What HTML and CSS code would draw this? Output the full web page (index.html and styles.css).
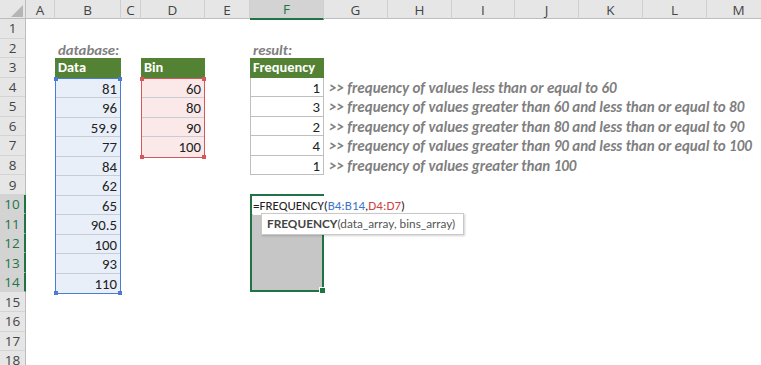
FILE: index.html
```html
<!DOCTYPE html>
<html lang="en">
<head>
    <meta charset="UTF-8">
    <meta name="viewport" content="width=device-width, initial-scale=1.0">
    <title>FREQUENCY - worksheet</title>
    <link rel="stylesheet" href="styles.css">
</head>
<body>
    <div class="sheet">
        <!-- En-têtes de colonnes -->
        <div class="col-heads">
            <div class="corner"><span class="corner-mark"></span></div>
            <div class="col-head">A</div>
            <div class="col-head">B</div>
            <div class="col-head">C</div>
            <div class="col-head">D</div>
            <div class="col-head">E</div>
            <div class="col-head selected">F</div>
            <div class="col-head">G</div>
            <div class="col-head">H</div>
            <div class="col-head">I</div>
            <div class="col-head">J</div>
            <div class="col-head">K</div>
            <div class="col-head">L</div>
            <div class="col-head">M</div>
        </div>

        <div class="sheet-body">
            <!-- En-têtes de lignes -->
            <div class="row-heads">
                <div class="row-head">1</div>
                <div class="row-head">2</div>
                <div class="row-head">3</div>
                <div class="row-head">4</div>
                <div class="row-head">5</div>
                <div class="row-head">6</div>
                <div class="row-head">7</div>
                <div class="row-head">8</div>
                <div class="row-head">9</div>
                <div class="row-head selected">10</div>
                <div class="row-head selected">11</div>
                <div class="row-head selected">12</div>
                <div class="row-head selected">13</div>
                <div class="row-head selected">14</div>
                <div class="row-head">15</div>
                <div class="row-head">16</div>
                <div class="row-head">17</div>
                <div class="row-head">18</div>
            </div>

            <div class="cells">
                <div class="caption cap-database">database:</div>
                <div class="caption cap-result">result:</div>

                <!-- B3:B14 -->
                <div class="range range-data">
                    <div class="cell head">Data</div>
                    <div class="ref ref-blue">
                        <div class="cell num">81</div>
                        <div class="cell num">96</div>
                        <div class="cell num">59.9</div>
                        <div class="cell num">77</div>
                        <div class="cell num">84</div>
                        <div class="cell num">62</div>
                        <div class="cell num">65</div>
                        <div class="cell num">90.5</div>
                        <div class="cell num">100</div>
                        <div class="cell num">93</div>
                        <div class="cell num">110</div>
                        <span class="dot tl"></span><span class="dot tr"></span>
                        <span class="dot bl"></span><span class="dot br"></span>
                    </div>
                </div>

                <!-- D3:D7 -->
                <div class="range range-bin">
                    <div class="cell head">Bin</div>
                    <div class="ref ref-red">
                        <div class="cell num">60</div>
                        <div class="cell num">80</div>
                        <div class="cell num">90</div>
                        <div class="cell num">100</div>
                        <span class="dot tl"></span><span class="dot tr"></span>
                        <span class="dot bl"></span><span class="dot br"></span>
                    </div>
                </div>

                <!-- F3:F8 -->
                <div class="range range-freq">
                    <div class="cell head">Frequency</div>
                    <div class="plain">
                        <div class="cell num">1</div>
                        <div class="cell num">3</div>
                        <div class="cell num">2</div>
                        <div class="cell num">4</div>
                        <div class="cell num">1</div>
                    </div>
                </div>

                <!-- G4:G8 -->
                <div class="notes">
                    <div class="note">&gt;&gt; frequency of values less than or equal to 60</div>
                    <div class="note">&gt;&gt; frequency of values greater than 60 and less than or equal to 80</div>
                    <div class="note">&gt;&gt; frequency of values greater than 80 and less than or equal to 90</div>
                    <div class="note">&gt;&gt; frequency of values greater than 90 and less than or equal to 100</div>
                    <div class="note">&gt;&gt; frequency of values greater than 100</div>
                </div>

                <!-- F10:F14 en cours d'édition -->
                <div class="selection">
                    <div class="edit-row">
                        <span class="formula">=FREQUENCY(<span class="f-blue">B4:B14</span>,<span class="f-red">D4:D7</span>)</span>
                    </div>
                    <div class="sel-fill"></div>
                    <span class="fill-handle"></span>
                    <div class="tooltip"><b>FREQUENCY</b>(data_array, bins_array)</div>
                </div>
            </div>
        </div>
    </div>
</body>
</html>
```

FILE: styles.css
```css
:root {
    --row: 19.54px;
    --cols: 29px 66px 20px 64px 45px 74px 64px 64px 63px 64px 64px 64px 64px;
    --green: #217346;
    --cell-font: "Carlito", Lato, "Liberation Sans", sans-serif;
}
body {
    margin: 0;
    background: #fff;
    overflow: hidden;
}
.sheet {
    display: flex;
    flex-direction: column;
    width: 761px;
    height: 365px;
    overflow: hidden;
    font-family: var(--cell-font);
    color: #222;
}

/* en-têtes */
.col-heads {
    display: grid;
    grid-template-columns: 26px var(--cols);
    height: 19px;
    flex: none;
    background: #e6e6e6;
    border-bottom: 1px solid #bdbdbd;
    box-sizing: border-box;
    font-family: "Open Sans", "Noto Sans", sans-serif;
    font-size: 13.5px;
    color: #444;
}
.corner {
    position: relative;
    border-right: 1px solid #bdbdbd;
}
.corner-mark {
    position: absolute;
    right: 2px;
    bottom: 2px;
    width: 0;
    height: 0;
    border-left: 12px solid transparent;
    border-bottom: 12px solid #b5b5b5;
}
.col-head {
    display: flex;
    align-items: center;
    justify-content: center;
    border-right: 1px solid #cfcfcf;
    line-height: 18px;
}
.col-head.selected {
    background: #d3d3d3;
    color: var(--green);
    border-bottom: 2px solid var(--green);
    margin-bottom: -1px;
}
.sheet-body {
    display: flex;
    flex: 1;
}
.row-heads {
    display: flex;
    flex-direction: column;
    width: 26px;
    flex: none;
    background: #e6e6e6;
    border-right: 1px solid #bdbdbd;
    box-sizing: border-box;
    font-family: "Open Sans", "Noto Sans", sans-serif;
    font-size: 13.5px;
    color: #444;
}
.row-head {
    height: var(--row);
    flex: none;
    box-sizing: border-box;
    border-bottom: 1px solid #d4d4d4;
    display: flex;
    align-items: center;
    justify-content: center;
}
.row-head.selected {
    background: #d3d3d3;
    color: var(--green);
    border-right: 2px solid var(--green);
    margin-right: -1px;
}

/* zone des cellules */
.cells {
    display: grid;
    grid-template-columns: var(--cols);
    grid-template-rows: repeat(18, var(--row));
    font-size: 14.8px;
}
.caption {
    grid-row: 2;
    white-space: nowrap;
    padding: 2px 0 0 3px;
    font-weight: bold;
    font-style: italic;
    color: #7f7f7f;
    line-height: var(--row);
}
.cap-database { grid-column: 2; }
.cap-result { grid-column: 6; }

.range {
    display: flex;
    flex-direction: column;
}
.range-data { grid-column: 2; grid-row: 3 / 15; }
.range-bin { grid-column: 4; grid-row: 3 / 8; }
.range-freq { grid-column: 6; grid-row: 3 / 9; }

.cell {
    height: var(--row);
    flex: none;
    box-sizing: border-box;
    line-height: var(--row);
    padding: 1px 3px 0;
    white-space: nowrap;
}
.cell.head {
    background: #548235;
    color: #fff;
    font-weight: bold;
    font-size: 14.4px;
    padding-top: 0;
}
.cell.num {
    text-align: right;
}
.ref {
    position: relative;
    flex: 1;
}
.ref .cell {
    border-bottom: 1px solid #c8ccd4;
}
.ref .cell:last-of-type {
    border-bottom: none;
}
.ref-blue {
    background: #e9eff9;
    border: 1px solid #4a7cd2;
}
.ref-red {
    background: #fbe9e9;
    border: 1px solid #d5575c;
}
.dot {
    position: absolute;
    width: 4px;
    height: 4px;
}
.ref-blue .dot { background: #4a7cd2; }
.ref-red .dot { background: #d5575c; }
.dot.tl { left: -2px; top: -2px; }
.dot.tr { right: -2px; top: -2px; }
.dot.bl { left: -2px; bottom: -2px; }
.dot.br { right: -2px; bottom: -2px; }

.plain {
    border-left: 1px solid #bfbfbf;
    border-right: 1px solid #bfbfbf;
}
.plain .cell {
    border-bottom: 1px solid #bfbfbf;
}

.notes {
    grid-column: 7 / 14;
    grid-row: 4 / 9;
    display: flex;
    flex-direction: column;
}
.note {
    height: var(--row);
    line-height: var(--row);
    padding: 1px 0 0 5px;
    box-sizing: border-box;
    white-space: nowrap;
    font-weight: bold;
    font-style: italic;
    font-size: 15px;
    color: #7f7f7f;
}

/* sélection F10:F14 */
.selection {
    grid-column: 6;
    grid-row: 10 / 15;
    position: relative;
    display: flex;
    flex-direction: column;
    border: 2px solid var(--green);
    margin: -1px 0 0 0;
}
.edit-row {
    height: calc(var(--row) - 1px);
    flex: none;
    background: #fff;
}
.formula {
    position: relative;
    z-index: 2;
    display: inline-block;
    margin-left: 1px;
    padding-right: 4px;
    background: #fff;
    white-space: nowrap;
    font-size: 13px;
    line-height: 19px;
    color: #222;
}
.f-blue { color: #3d74cc; }
.f-red { color: #cf3f44; }
.sel-fill {
    flex: 1;
    background: #c6c6c6;
}
.fill-handle {
    position: absolute;
    right: -4px;
    bottom: -4px;
    width: 5px;
    height: 5px;
    background: var(--green);
    border: 1px solid #fff;
}
.tooltip {
    position: absolute;
    left: 9px;
    top: 17px;
    z-index: 3;
    height: 22px;
    box-sizing: border-box;
    padding: 0 8px 0 5px;
    background: #fff;
    border: 1px solid #c9c9c9;
    box-shadow: 1px 1px 2px rgba(0, 0, 0, 0.18);
    white-space: nowrap;
    font-family: Lato, "Open Sans", sans-serif;
    font-size: 11.8px;
    line-height: 20px;
    color: #555;
}
.tooltip b {
    color: #444;
}
```
